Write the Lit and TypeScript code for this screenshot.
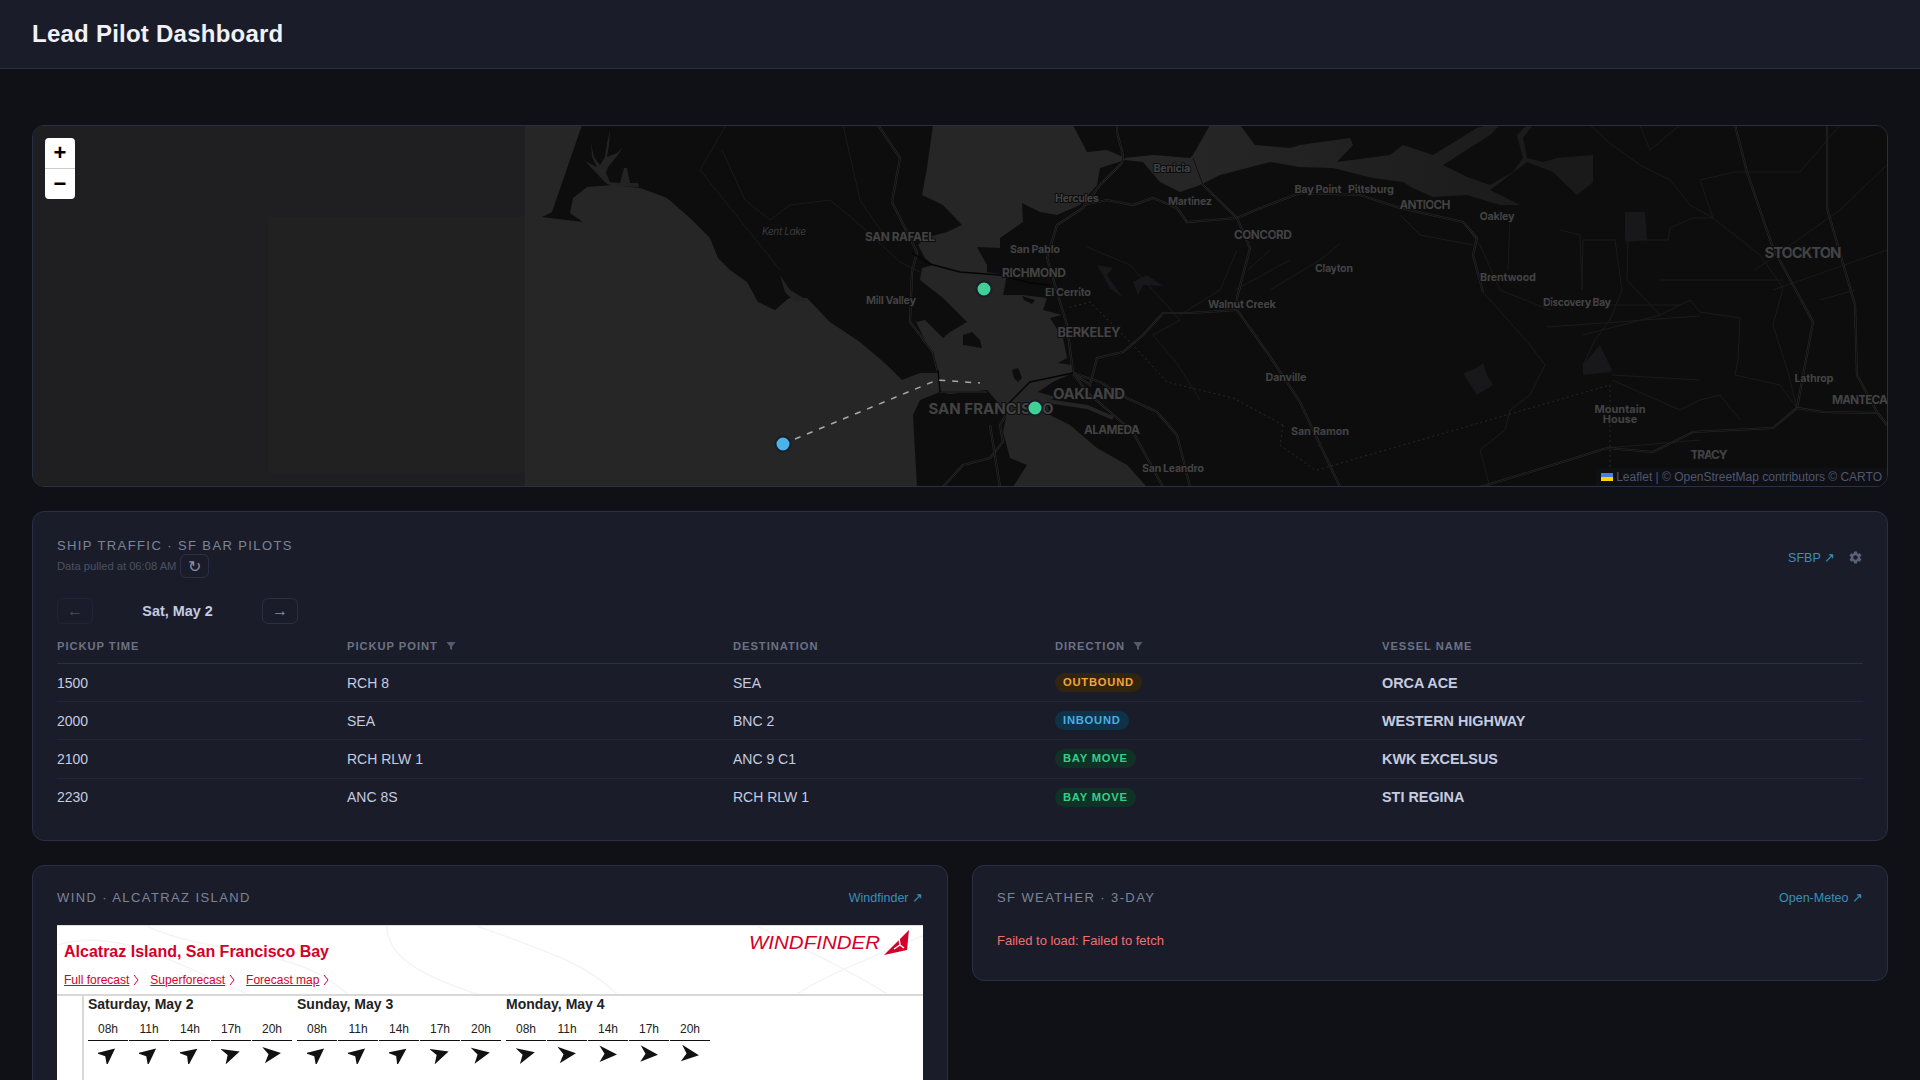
import {css, html, LitElement, svg} from "lit";
import {customElement} from "lit/decorators.js";

// map geometry is written in page pixels, the viewBox of the svg lines it up
const LAND = [
	"582,125 552,212 542,217 583,222 570,213 573,198 587,187 613,185 640,188 667,198 690,218 710,238 718,258 730,270 747,282 758,302 775,310 789,298 807,298 830,322 860,342 887,365 902,380 920,373 938,373 935,358 925,340 916,322 925,320 943,338 950,332 967,322 943,298 920,280 922,268 933,265 925,258 918,245 925,238 947,232 962,225 943,205 922,195 927,168 933,125",
	"913,415 920,400 940,392 950,394 987,390 1007,413 1003,432 1010,458 1027,465 1013,487 917,487",
	"1073,125 1087,152 1107,150 1123,157 1125,160 1100,168 1097,185 1080,205 1057,215 1040,212 1022,203 1023,222 1000,238 1000,248 977,247 987,265 987,272 1007,275 1003,295 1023,295 1047,298 1043,310 1062,315 1050,318 1063,338 1067,358 1058,363 1072,365 1073,373 1053,382 1038,392 1055,397 1047,403 1050,415 1070,425 1097,448 1127,465 1147,487 1887,487 1887,125",
	"963,335 972,332 980,340 982,348 970,346 963,345",
	"1012,370 1018,368 1022,378 1018,382 1014,378",
	"1022,296 1035,300 1032,304 1024,300",
];

const INLETS = [
	"585,161 597,167 592,157 591,143 594,157 600,165 605,157 607,143 610,130 609,145 607,157 617,153 623,147 618,155 608,167 606,173 610,182 620,183 624,168 627,168 630,183 638,183 639,187 613,186 607,184 600,177",
	"780,275 790,290 807,300 795,302 785,292",
];

const DELTA = "1125,158 1153,155 1190,158 1193,155 1210,125 1240,125 1255,145 1290,148 1300,145 1350,138 1353,145 1337,162 1390,155 1403,145 1433,155 1477,128 1487,125 1500,125 1490,135 1443,165 1467,177 1490,185 1513,172 1523,158 1517,135 1527,125 1533,125 1523,138 1527,158 1543,162 1557,158 1593,155 1593,182 1577,195 1553,172 1527,162 1490,190 1520,205 1500,205 1467,195 1433,197 1413,188 1403,182 1373,178 1333,168 1300,167 1270,162 1247,168 1220,175 1200,185 1180,192 1160,182 1143,162 1125,160";

const LAKES = [
	"1625,212 1645,212 1647,240 1625,242",
	"1583,365 1600,345 1612,370 1610,372 1583,375",
	"1463,373 1477,368 1483,363 1487,375 1493,385 1477,395",
	"1097,265 1113,268 1107,275 1123,298 1110,288",
	"1133,282 1147,275 1163,286 1143,285 1138,295",
];

const HIGHWAYS = [
	"1073,373 1067,325 1060,302 1047,258 1057,225 1083,208 1100,185 1122,163 1123,155 1117,132 1117,125",
	"1083,205 1107,200 1133,205 1153,198 1177,208 1187,222 1213,220 1237,218 1263,207 1300,193 1360,195 1400,208 1463,222 1477,238 1473,255 1483,292",
	"1193,158 1203,185 1237,218 1250,248 1237,298 1237,310 1267,352 1300,402 1340,487",
	"1237,310 1190,313 1163,313 1143,335 1123,352 1097,358 1090,385 1073,373",
	"1073,373 1100,382 1127,398 1157,412 1177,435 1190,487",
	"1073,373 1087,392 1133,432 1163,487",
	"878,125 900,158 892,202 917,252 912,272 910,322 933,352 938,372",
	"1007,413 1000,425 1003,442 990,458 963,465 943,487",
	"990,425 1000,487",
	"940,392 987,392",
	"1735,125 1747,172 1773,248 1813,322 1797,408",
	"1827,125 1827,208 1855,305 1857,375 1877,412 1887,425",
	"1480,487 1530,472 1607,448 1653,452 1693,432 1773,428 1797,408 1823,412 1877,413",
];

const BRIDGES = [
	"912,253 930,264 960,272 1000,275 1030,283 1050,285",
	"1007,405 1030,382 1073,373",
	"938,370 940,392",
];

const THIN = [
	"843,125 860,200 884,235",
	"726,125 700,170 780,270",
	"722,150 745,200 770,220 790,205 830,200 860,225 900,262 920,272",
	"1087,247 1130,265 1180,320 1153,335 1178,365 1200,400",
	"1237,250 1220,290 1180,315",
	"1340,244 1320,260 1270,290",
	"1400,215 1420,235 1473,245",
	"1463,222 1480,245 1500,290 1550,310",
	"1483,292 1530,345 1545,365 1530,395 1510,410 1505,430 1480,450 1490,487",
	"1510,215 1508,270",
	"1560,230 1580,235 1582,290 1583,240 1615,240 1622,290 1610,320 1595,340 1583,365",
	"1583,335 1660,315 1690,300 1700,312 1740,318 1738,360 1735,375 1780,385 1797,408",
	"1660,315 1627,280 1628,240 1668,240 1670,228 1693,218 1713,218 1760,255 1783,288 1773,325 1788,372 1797,408",
	"1660,280 1700,280 1783,280",
	"1547,327 1700,316",
	"1612,375 1700,380",
	"1612,380 1680,410 1700,400 1720,395 1740,420",
	"1590,125 1612,145 1640,165 1670,180 1690,205 1713,218",
	"1640,125 1650,150 1680,125",
	"1713,218 1700,180 1735,172 1800,172 1840,125",
	"1840,210 1887,165",
	"1755,270 1840,210",
	"1820,300 1855,290",
	"1773,290 1887,250",
	"1248,270 1270,250",
	"1290,260 1235,290",
	"1545,305 1680,305",
	"1607,448 1700,440",
];

const COUNTY = [
	"1317,470 1610,385 1610,470",
	"1283,425 1233,398 1167,382 1130,342 1090,302 1067,308",
	"1283,425 1280,445 1315,470",
];

const LABELS: [string, number, number, number, number][] = [
	["SAN RAFAEL", 900, 241, 12, 70],
	["Mill Valley", 891, 304, 11, 50],
	["Benicia", 1172, 172, 11, 37],
	["Hercules", 1077, 202, 11, 44],
	["Martinez", 1190, 205, 11, 44],
	["Bay Point", 1318, 193, 11, 47],
	["Pittsburg", 1371, 193, 11, 46],
	["ANTIOCH", 1425, 209, 12, 51],
	["Oakley", 1497, 220, 11, 35],
	["CONCORD", 1263, 239, 12, 58],
	["San Pablo", 1035, 253, 11, 50],
	["RICHMOND", 1034, 277, 12, 64],
	["El Cerrito", 1068, 296, 11, 46],
	["Clayton", 1334, 272, 11, 38],
	["Brentwood", 1508, 281, 11, 56],
	["Walnut Creek", 1242, 308, 11, 68],
	["Discovery Bay", 1577, 306, 11, 68],
	["BERKELEY", 1089, 337, 13, 63],
	["Danville", 1286, 381, 11, 41],
	["OAKLAND", 1089, 399, 15, 72],
	["SAN FRANCISCO", 991, 414, 15, 125],
	["ALAMEDA", 1112, 434, 12, 56],
	["San Ramon", 1320, 435, 11, 58],
	["San Leandro", 1173, 472, 11, 62],
	["STOCKTON", 1803, 258, 15, 77],
	["Lathrop", 1814, 382, 11, 39],
	["MANTECA", 1860, 404, 12, 56],
	["TRACY", 1709, 459, 12, 37],
];

const SHIPS = [
	{time: "1500", from: "RCH 8", to: "SEA", dir: "OUTBOUND", vessel: "ORCA ACE"},
	{time: "2000", from: "SEA", to: "BNC 2", dir: "INBOUND", vessel: "WESTERN HIGHWAY"},
	{time: "2100", from: "RCH RLW 1", to: "ANC 9 C1", dir: "BAY MOVE", vessel: "KWK EXCELSUS"},
	{time: "2230", from: "ANC 8S", to: "RCH RLW 1", dir: "BAY MOVE", vessel: "STI REGINA"},
];

const DAYS = [
	{name: "Saturday, May 2", arrows: [-38, -38, -35, -16, -6]},
	{name: "Sunday, May 3", arrows: [-38, -38, -35, -16, -10]},
	{name: "Monday, May 4", arrows: [-12, -5, 3, 5, 8]},
];

const HOURS = ["08h", "11h", "14h", "17h", "20h"];

const funnel = html`<svg class="funnel" viewBox="0 0 10 10"><path d="M0.5 1h9L6 5.5V9L4 8V5.5z"/></svg>`;
const chevron = html`<svg class="chev" viewBox="0 0 6 12"><path d="M1 1l4 5-4 5"/></svg>`;
const gear = html`<svg class="gear" viewBox="0 0 24 24"><path d="M19.14 12.94c.04-.3.06-.61.06-.94 0-.32-.02-.64-.07-.94l2.03-1.58a.49.49 0 0 0 .12-.61l-1.92-3.32a.488.488 0 0 0-.59-.22l-2.39.96c-.5-.38-1.03-.7-1.62-.94l-.36-2.54a.484.484 0 0 0-.48-.41h-3.84c-.24 0-.43.17-.47.41l-.36 2.54c-.59.24-1.13.57-1.62.94l-2.39-.96c-.22-.08-.47 0-.59.22L2.74 8.87c-.12.21-.08.47.12.61l2.03 1.58c-.05.3-.09.63-.09.94s.02.64.07.94l-2.03 1.58a.49.49 0 0 0-.12.61l1.92 3.32c.12.22.37.29.59.22l2.39-.96c.5.38 1.03.7 1.62.94l.36 2.54c.05.24.24.41.48.41h3.84c.24 0 .44-.17.47-.41l.36-2.54c.59-.24 1.13-.56 1.62-.94l2.39.96c.22.08.47 0 .59-.22l1.92-3.32c.12-.22.07-.47-.12-.61l-2.01-1.58zM12 15.6c-1.98 0-3.6-1.62-3.6-3.6s1.62-3.6 3.6-3.6 3.6 1.62 3.6 3.6-1.62 3.6-3.6 3.6z"/></svg>`;

@customElement("bay-map")
class BayMap extends LitElement {
	static styles = css`
		:host {
			display: block;
			position: relative;
			height: 360px;
			background: #262627;
			overflow: hidden;
			border-radius: 11px;
		}

		svg.tiles {
			display: block;
			width: 100%;
			height: 100%;
		}

		.land { fill: #0d0d0e; }
		.water { fill: #232324; }
		.lake { fill: #18181a; }
		.hi-o { fill: none; stroke: #2a2a2b; stroke-width: 2.2; }
		.hi-i { fill: none; stroke: #0c0c0d; stroke-width: 0.9; }
		.bridge { fill: none; stroke: #050505; stroke-width: 1.4; }
		.thin { fill: none; stroke: #1b1b1c; stroke-width: 1; }
		.channel { fill: none; stroke: #252526; stroke-width: 4; }
		.county { fill: none; stroke: #282829; stroke-width: 1; stroke-dasharray: 2 3; }
		.route { fill: none; stroke: #a8a8a8; stroke-width: 1.5; stroke-dasharray: 6 7; }

		.lbl {
			font-family: "Inter", "Liberation Sans", sans-serif;
			font-weight: 700;
			fill: #434344;
			stroke: #0e0e0f;
			stroke-width: 2px;
			paint-order: stroke;
			text-anchor: middle;
		}

		.lake-lbl {
			font-family: "Inter", "Liberation Sans", sans-serif;
			font-style: italic;
			font-size: 10px;
			fill: #3c3c3d;
			text-anchor: middle;
		}

		.zoom {
			position: absolute;
			left: 12px;
			top: 12px;
			width: 30px;
			background: #fff;
			border-radius: 4px;
			display: flex;
			flex-direction: column;
		}

		.zoom span {
			height: 30px;
			display: flex;
			align-items: center;
			justify-content: center;
			font: bold 22px "Liberation Sans", sans-serif;
			color: #000;
		}

		.zoom span + span {
			border-top: 1px solid #ccc;
		}

		.attr {
			position: absolute;
			right: 0;
			bottom: 0;
			display: flex;
			align-items: center;
			gap: 3px;
			padding: 0 5px 1px;
			height: 17px;
			background: rgba(15, 17, 23, 0.8);
			font: 12px "Liberation Sans", sans-serif;
			color: #50566e;
		}

		.flag {
			width: 12px;
			height: 8px;
			display: block;
		}
	`;

	render() {
		return html`
			<svg class="tiles" viewBox="33 126 1854 360" preserveAspectRatio="none">
				<defs>
					<linearGradient id="delta" gradientUnits="userSpaceOnUse" x1="1200" y1="0" x2="1550" y2="0">
						<stop offset="0" stop-color="#262627"/>
						<stop offset="1" stop-color="#1a1a1b"/>
					</linearGradient>
				</defs>
				<rect x="33" y="126" width="492" height="360" fill="#1f1f21"/>
				<rect x="268" y="217" width="257" height="256" fill="#212122"/>
				${LAND.map((p) => svg`<polygon class="land" points=${p}/>`)}
				<polygon points=${DELTA} fill="url(#delta)"/>
				${INLETS.map((p) => svg`<polygon class="water" points=${p}/>`)}
				${LAKES.map((p) => svg`<polygon class="lake" points=${p}/>`)}
				<polyline class="channel" points="1047,401 1087,407 1113,418"/>
				${THIN.map((p) => svg`<polyline class="thin" points=${p}/>`)}
				${COUNTY.map((p) => svg`<polyline class="county" points=${p}/>`)}
				${HIGHWAYS.map((p) => svg`<polyline class="hi-o" points=${p}/><polyline class="hi-i" points=${p}/>`)}
				${BRIDGES.map((p) => svg`<polyline class="bridge" points=${p}/>`)}
				<text class="lake-lbl" x="784" y="235" textLength="44">Kent Lake</text>
				${LABELS.map(([t, x, y, size, w]) => svg`<text class="lbl" x=${x} y=${y} font-size=${size} textLength=${w}>${t}</text>`)}
				<text class="lbl" font-size="11"><tspan x="1620" y="413">Mountain</tspan><tspan x="1620" y="423">House</tspan></text>
				<polyline class="route" points="783,444 937,380 980,383"/>
				<circle cx="783" cy="444" r="7.5" fill="#4ab3e8" stroke="#1a1d29" stroke-width="2"/>
				<circle cx="984" cy="289" r="7.5" fill="#40d095" stroke="#1a1d29" stroke-width="2"/>
				<circle cx="1035" cy="408" r="7.5" fill="#40d095" stroke="#1a1d29" stroke-width="2"/>
			</svg>
			<div class="zoom"><span>+</span><span>−</span></div>
			<div class="attr">
				<svg class="flag" viewBox="0 0 12 8"><rect width="12" height="4" fill="#4c7be1"/><rect y="4" width="12" height="4" fill="#ffd500"/></svg>
				<span>Leaflet | © OpenStreetMap contributors © CARTO</span>
			</div>
		`;
	}
}

@customElement("wind-widget")
class WindWidget extends LitElement {
	static styles = css`
		:host {
			display: block;
			position: relative;
			background: #fff;
			border-top: 1px solid #ddd;
			height: 260px;
			font-family: "Liberation Sans", Arial, sans-serif;
			color: #222;
			overflow: hidden;
		}

		.top {
			position: relative;
			height: 53px;
			border-bottom: 2px solid #d8d8d8;
			padding: 15px 7px 0;
		}

		.topo {
			position: absolute;
			inset: 0;
			width: 100%;
			height: 100%;
		}

		.topo path {
			fill: none;
			stroke: #f4f4f4;
			stroke-width: 1.5;
		}

		h3 {
			position: relative;
			margin: 0;
			font-size: 16px;
			line-height: 22px;
			font-weight: bold;
			color: #d4002a;
		}

		.links {
			position: relative;
			display: flex;
			margin-top: 10px;
			gap: 11px;
			font-size: 12px;
			line-height: 14px;
			color: #d4002a;
		}

		.links span {
			display: flex;
			align-items: center;
			gap: 4px;
		}

		.links u {
			text-decoration: underline;
		}

		.chev {
			width: 6px;
			height: 12px;
		}

		.chev path {
			fill: none;
			stroke: #d4002a;
			stroke-width: 1;
		}

		.logo {
			position: absolute;
			right: 13px;
			top: 3px;
			width: 162px;
			height: 28px;
		}

		.logo text {
			font: italic 18px "Liberation Sans", sans-serif;
			fill: #d4002a;
		}

		.body {
			display: flex;
			margin-left: 25px;
			border-left: 2px solid #d8d8d8;
			padding-left: 4px;
			height: 190px;
		}

		.day {
			width: 209px;
		}

		.day h4 {
			margin: 0;
			font-size: 14px;
			line-height: 17px;
			font-weight: bold;
			color: #222;
		}

		.hours {
			display: flex;
			margin-top: 8px;
		}

		.hour {
			width: 40px;
			margin-right: 1px;
			text-align: center;
		}

		.hour b {
			display: block;
			font-weight: normal;
			font-size: 12px;
			line-height: 16px;
			padding-bottom: 3px;
			border-bottom: 1px solid #111;
		}

		.hour svg {
			display: block;
			width: 20px;
			height: 20px;
			margin: 3px auto 0;
		}
	`;

	render() {
		return html`
			<div class="top">
				<svg class="topo" viewBox="0 0 866 70" preserveAspectRatio="none">
					<path d="M0 20C60 0 120 40 190 70M90 0C150 30 240 20 290 70M330 0C330 30 360 50 420 70M420 0C500 30 530 40 560 70M700 0C760 30 800 50 830 70M866 10C820 30 770 50 740 70"/>
				</svg>
				<h3>Alcatraz Island, San Francisco Bay</h3>
				<div class="links">
					<span><u>Full forecast</u>${chevron}</span>
					<span><u>Superforecast</u>${chevron}</span>
					<span><u>Forecast map</u>${chevron}</span>
				</div>
				<svg class="logo" viewBox="0 0 162 28">
					<text x="1" y="20" textLength="131" lengthAdjust="spacingAndGlyphs">WINDFINDER</text>
					<polygon points="136,26 161,1 159,21" fill="#d4002a"/>
					<path d="M151 9l1 7M152 16l-6 4M152 16l4 3" stroke="#fff" stroke-width="1.5" fill="none"/>
				</svg>
			</div>
			<div class="body">
				${DAYS.map((d) => html`
					<div class="day">
						<h4>${d.name}</h4>
						<div class="hours">
							${HOURS.map((h, i) => html`
								<div class="hour">
									<b>${h}</b>
									<svg viewBox="0 0 20 20"><polygon points="19,10 1,2 6.5,10 2,18.5" fill="#111" transform="rotate(${d.arrows[i]} 10 10)"/></svg>
								</div>
							`)}
						</div>
					</div>
				`)}
			</div>
		`;
	}
}

@customElement("app-root")
export default class AppRoot extends LitElement {
	static styles = css`
		:host {
			display: block;
			min-height: 100vh;
			background: #0f1117;
			font-family: "Liberation Sans", Arial, sans-serif;
			color: #c5cbe0;
		}

		header {
			height: 68px;
			border-bottom: 1px solid #2a2f45;
			background: #1a1d29;
			display: flex;
			align-items: center;
			padding: 0 32px;
		}

		h1 {
			margin: 0;
			font-size: 24px;
			font-weight: bold;
			letter-spacing: 0.01em;
			color: #f0f2f8;
		}

		main {
			padding: 56px 32px 32px;
			display: flex;
			flex-direction: column;
			gap: 24px;
		}

		.map {
			border: 1px solid #2a2f45;
			border-radius: 12px;
		}

		.card {
			background: #1a1d29;
			border: 1px solid #2a2f45;
			border-radius: 12px;
			padding: 24px;
		}

		.head {
			display: flex;
			justify-content: space-between;
			align-items: center;
			margin-bottom: 20px;
		}

		.title {
			font-size: 13px;
			line-height: 15px;
			letter-spacing: 1.4px;
			color: #7d8499;
		}

		.ship-title {
			padding-top: 2px;
			line-height: 16px;
		}

		.pulled {
			display: flex;
			align-items: center;
			gap: 4px;
			font-size: 11.2px;
			color: #4b5163;
		}

		.refresh {
			width: 29px;
			height: 24px;
			box-sizing: border-box;
			border: 1px solid #2a2f45;
			border-radius: 6px;
			display: flex;
			align-items: center;
			justify-content: center;
			font-size: 16px;
			color: #8b90a5;
		}

		.links {
			display: flex;
			align-items: center;
			gap: 13px;
		}

		a {
			font-size: 12.5px;
			color: #3a8fb7;
			text-decoration: none;
		}

		.gear {
			width: 15px;
			height: 15px;
			fill: #5a6075;
		}

		.nav {
			display: flex;
			align-items: center;
			gap: 12px;
			margin-bottom: 8px;
		}

		.nav-btn {
			width: 36px;
			height: 26px;
			box-sizing: border-box;
			border: 1px solid #2a2f45;
			border-radius: 6px;
			display: flex;
			align-items: center;
			justify-content: center;
			font-size: 16px;
			color: #8b90a5;
		}

		.nav-btn.off {
			opacity: 0.4;
		}

		.date {
			width: 145px;
			text-align: center;
			font-size: 14.4px;
			font-weight: bold;
			color: #c5cbe0;
		}

		table {
			width: 100%;
			table-layout: fixed;
			border-collapse: collapse;
		}

		th {
			padding: 8px 0 10px;
			text-align: left;
			font-size: 11.2px;
			line-height: 13px;
			font-weight: bold;
			letter-spacing: 0.085em;
			color: #6b7285;
			border-bottom: 1px solid #2a2f45;
		}

		.funnel {
			width: 10px;
			height: 10px;
			margin-left: 4px;
			vertical-align: -1px;
			fill: #555b6e;
		}

		td {
			height: 37.2px;
			padding: 0;
			font-size: 14px;
			color: #c5cbe0;
			border-bottom: 1px solid #22263a;
		}

		tr:last-child td {
			border-bottom: 0;
		}

		td.vessel {
			font-size: 14.4px;
			font-weight: bold;
		}

		.badge {
			display: inline-block;
			padding: 3px 8px;
			border-radius: 10px;
			font-size: 11.2px;
			line-height: 13px;
			font-weight: bold;
			letter-spacing: 0.07em;
		}

		.OUTBOUND { background: #33240f; color: #f0a63c; }
		.INBOUND { background: #0f3249; color: #46b1e6; }
		.BAY { background: #0f3126; color: #34d08a; }

		.bottom {
			display: grid;
			grid-template-columns: 1fr 1fr;
			gap: 24px;
			align-items: start;
		}

		.error {
			padding: 8px 0;
			font-size: 13px;
			line-height: 15px;
			color: #f07070;
		}
	`;

	render() {
		return html`
			<header><h1>Lead Pilot Dashboard</h1></header>
			<main>
				<div class="map"><bay-map></bay-map></div>

				<section class="card">
					<div class="head">
						<div>
							<div class="title ship-title">SHIP TRAFFIC · SF BAR PILOTS</div>
							<div class="pulled">Data pulled at 06:08 AM <span class="refresh">↻</span></div>
						</div>
						<div class="links">
							<a>SFBP ↗</a>
							${gear}
						</div>
					</div>
					<div class="nav">
						<span class="nav-btn off">←</span>
						<span class="date">Sat, May 2</span>
						<span class="nav-btn">→</span>
					</div>
					<table>
						<colgroup>
							<col style="width:290px"/><col style="width:386px"/><col style="width:322px"/><col style="width:327px"/><col/>
						</colgroup>
						<thead>
							<tr>
								<th>PICKUP TIME</th>
								<th>PICKUP POINT ${funnel}</th>
								<th>DESTINATION</th>
								<th>DIRECTION ${funnel}</th>
								<th>VESSEL NAME</th>
							</tr>
						</thead>
						<tbody>
							${SHIPS.map((s) => html`
								<tr>
									<td>${s.time}</td>
									<td>${s.from}</td>
									<td>${s.to}</td>
									<td><span class="badge ${s.dir.split(" ")[0]}">${s.dir}</span></td>
									<td class="vessel">${s.vessel}</td>
								</tr>
							`)}
						</tbody>
					</table>
				</section>

				<div class="bottom">
					<section class="card">
						<div class="head">
							<div class="title">WIND · ALCATRAZ ISLAND</div>
							<a>Windfinder ↗</a>
						</div>
						<wind-widget></wind-widget>
					</section>
					<section class="card">
						<div class="head">
							<div class="title">SF WEATHER · 3-DAY</div>
							<a>Open-Meteo ↗</a>
						</div>
						<div class="error">Failed to load: Failed to fetch</div>
					</section>
				</div>
			</main>
		`;
	}
}
